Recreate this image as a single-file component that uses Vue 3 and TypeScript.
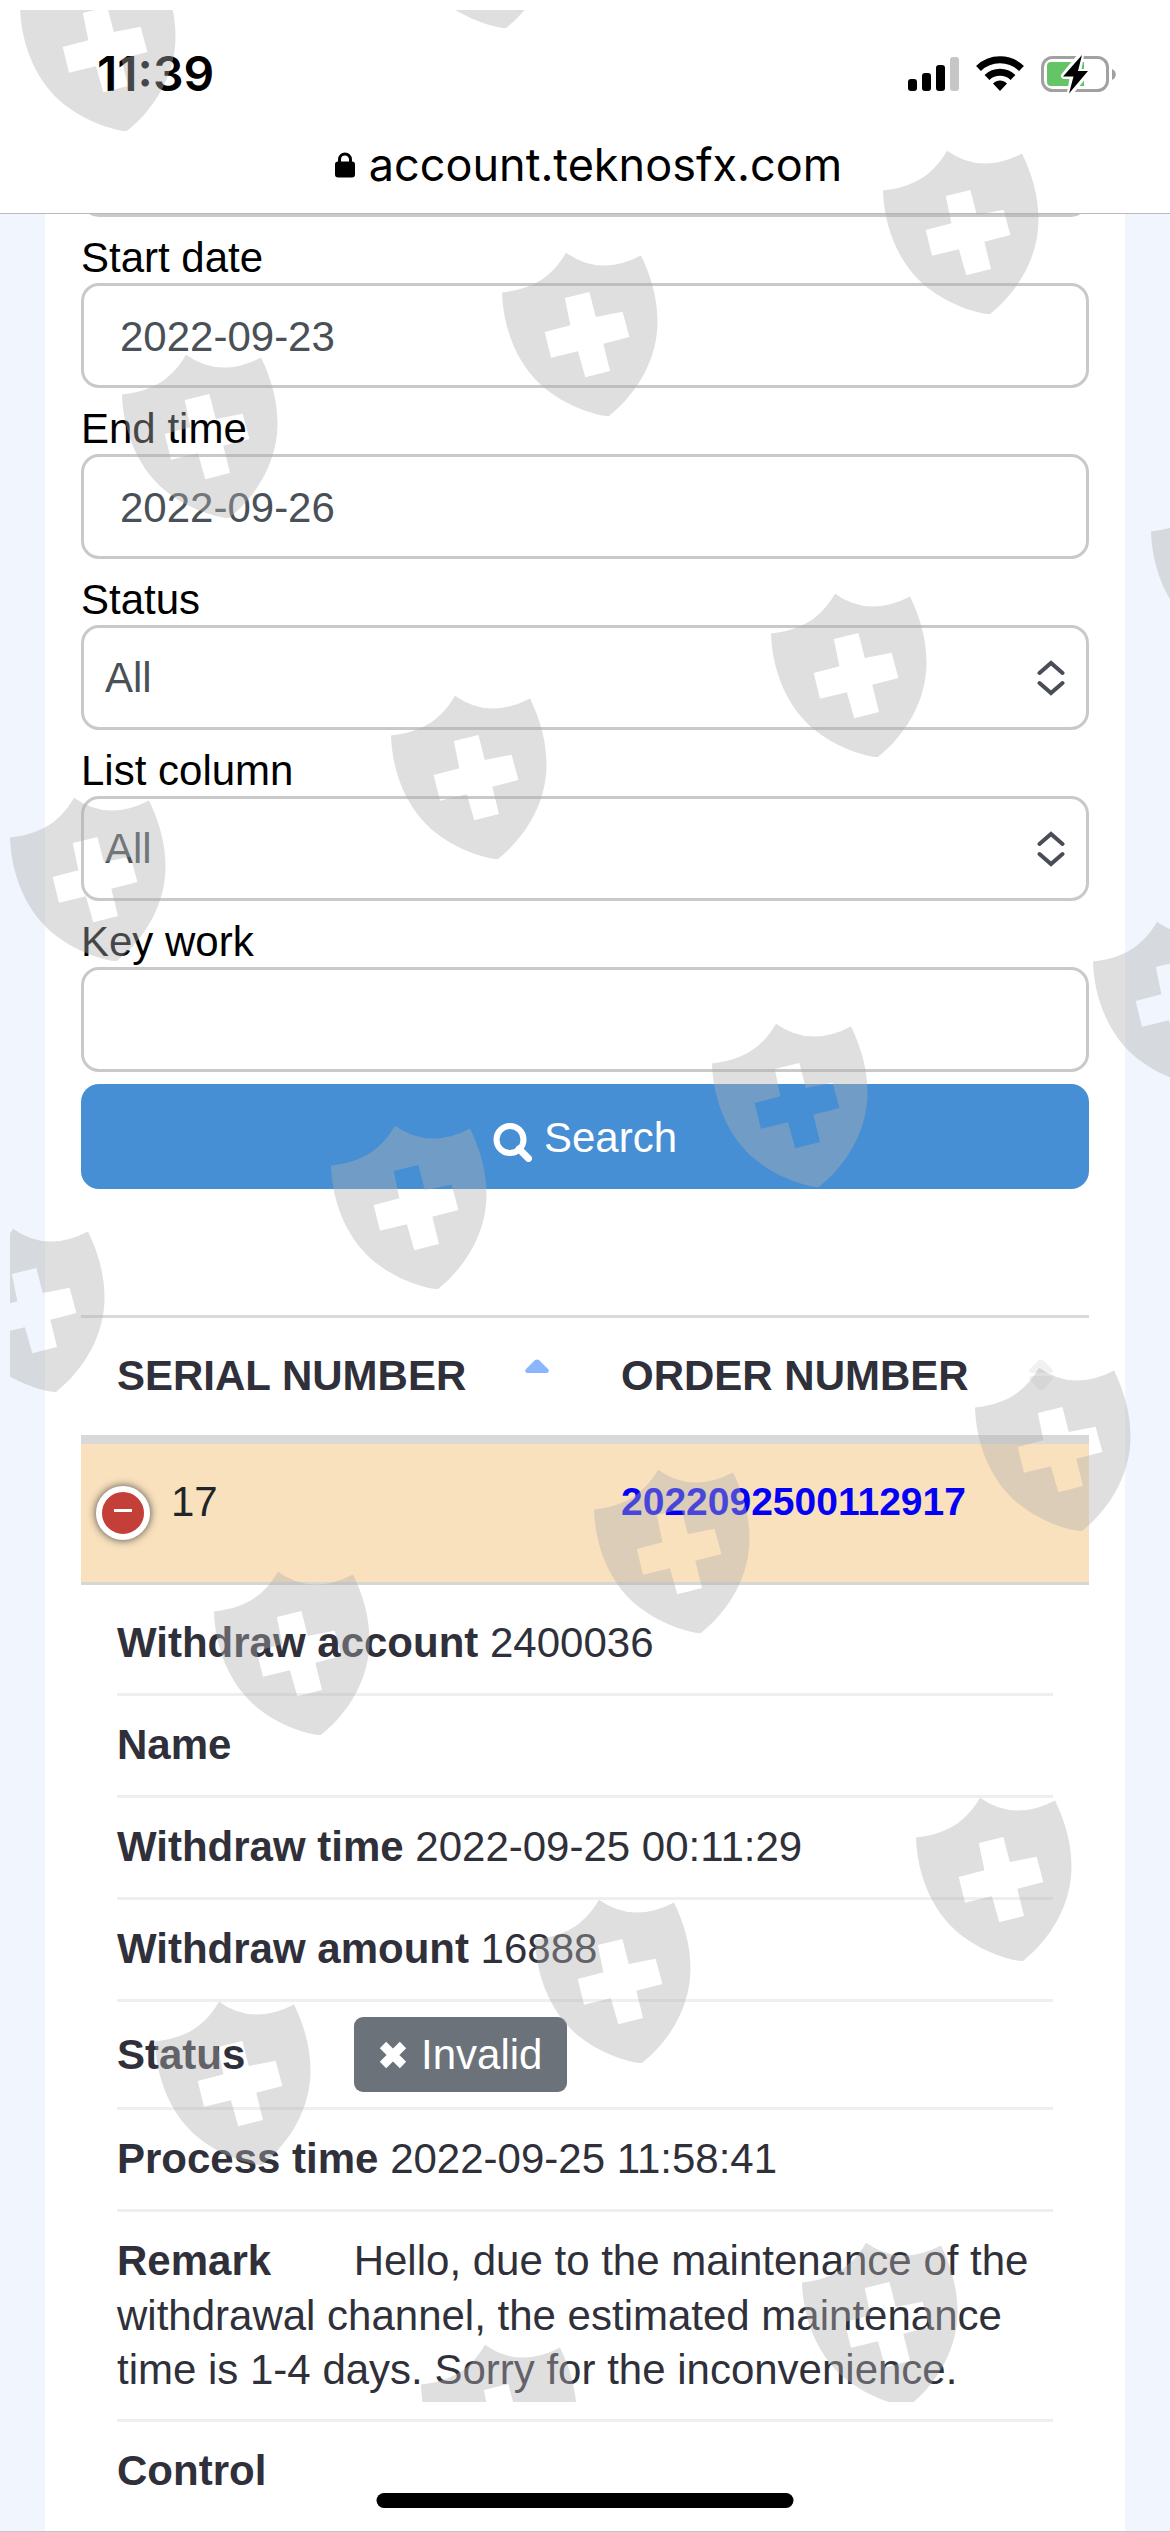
<script setup lang="ts">
import { ref } from 'vue'

interface Detail {
  title: string
  value: string
  badge?: boolean
}

const account = ref('')
const startDate = ref('2022-09-23')
const endDate = ref('2022-09-26')
const status = ref('All')
const column = ref('All')
const keyword = ref('')
const expanded = ref(true)

const details: Detail[] = [
  { title: 'Withdraw account', value: '2400036' },
  { title: 'Name', value: '' },
  { title: 'Withdraw time', value: '2022-09-25 00:11:29' },
  { title: 'Withdraw amount', value: '16888' },
  { title: 'Status', value: 'Invalid', badge: true },
  { title: 'Process time', value: '2022-09-25 11:58:41' },
  {
    title: 'Remark',
    value:
      'Hello, due to the maintenance of the withdrawal channel, the estimated maintenance time is 1-4 days. Sorry for the inconvenience.',
  },
  { title: 'Control', value: '' },
]

// Shield stamps scattered over the screen
const stamps: [number, number][] = [
  [10, -43], [389, -146], [873, 140], [492, 242], [112, 344], [1141, 481],
  [761, 583], [381, 685], [0, 787], [1083, 911], [702, 1013], [321, 1115],
  [-61, 1218], [965, 1357], [584, 1459], [204, 1561], [906, 1787],
  [525, 1889], [145, 1991], [792, 2232], [411, 2334],
]
</script>

<template>
  <div class="screen">
    <header class="chrome">
      <div class="status-bar">
        <span class="clock">11:39</span>
        <svg class="indicators" width="210" height="40" viewBox="0 0 210 40" aria-hidden="true">
          <rect x="2" y="25" width="9" height="12" rx="3" />
          <rect x="16" y="19" width="9" height="18" rx="3" />
          <rect x="30" y="11" width="9" height="26" rx="3" />
          <rect x="44" y="3" width="9" height="34" rx="3" fill="#c6c6c6" />
          <g fill="none" stroke="#000" stroke-width="7">
            <path d="M72.500 14.500A31 31 0 0 1 115.500 14.500" />
            <path d="M81 23.500A19 19 0 0 1 107 23.500" />
          </g>
          <path d="M94 37l-7-7.500c4-4 10-4 14 0z" />
          <rect x="136.500" y="3.500" width="65" height="33" rx="10" fill="none" stroke="#a1a1a1" stroke-width="3" />
          <path d="M206 15c5 2 5 9 0 11z" fill="#a1a1a1" />
          <path d="M145 8h33v24h-33q-4 0-4-4V12q0-4 4-4z" fill="#65c466" />
          <path
            d="M175 1l-17 21h9l-3 17 17-21h-9z"
            stroke="#fff" stroke-width="6" stroke-linejoin="round" fill="#fff"
          />
          <path d="M176 1l-19 21.500h10.500l-4.500 17 19-22.500h-10z" />
        </svg>
      </div>
      <div class="address">
        <svg width="20" height="26" viewBox="0 0 20 26" aria-hidden="true">
          <path d="M4.500 12V7.500a5.500 5.500 0 0 1 11 0V12" fill="none" stroke="#000" stroke-width="3" />
          <rect y="9.500" width="20" height="16" rx="3" />
        </svg>
        <span>account.teknosfx.com</span>
      </div>
    </header>

    <main class="viewport">
      <section class="card">
        <form class="filters" @submit.prevent>
          <input v-model="account" class="control" type="text" aria-label="Account" />

          <label for="start">Start date</label>
          <input id="start" v-model="startDate" class="control" type="text" />

          <label for="end">End time</label>
          <input id="end" v-model="endDate" class="control" type="text" />

          <label for="status">Status</label>
          <div class="select">
            <select id="status" v-model="status" class="control">
              <option>All</option>
            </select>
            <svg width="28" height="36" viewBox="0 0 28 36" aria-hidden="true">
              <path d="M2.500 13L14 3l11.500 10M2.500 23L14 33l11.500-10" />
            </svg>
          </div>

          <label for="column">List column</label>
          <div class="select">
            <select id="column" v-model="column" class="control">
              <option>All</option>
            </select>
            <svg width="28" height="36" viewBox="0 0 28 36" aria-hidden="true">
              <path d="M2.500 13L14 3l11.500 10M2.500 23L14 33l11.500-10" />
            </svg>
          </div>

          <label for="keyword">Key work</label>
          <input id="keyword" v-model="keyword" class="control" type="text" />

          <button class="search" type="submit">
            <svg width="39" height="39" viewBox="0 0 39 39" aria-hidden="true">
              <circle cx="17" cy="16.500" r="13.500" fill="none" stroke="#fff" stroke-width="6" />
              <path d="M26 26l9.500 9.500" stroke="#fff" stroke-width="7" stroke-linecap="round" />
            </svg>
            <span>Search</span>
          </button>
        </form>

        <table class="orders">
          <thead>
            <tr>
              <th scope="col">
                <button class="sort" type="button">
                  <span>SERIAL NUMBER</span>
                  <svg width="24" height="34" viewBox="0 0 24 34" aria-hidden="true">
                    <path d="M2 14q-3-1-1-4l9-9q2-1 4 0l9 9q2 3-1 4z" fill="#8bb6fb" />
                  </svg>
                </button>
              </th>
              <th scope="col">
                <button class="sort" type="button">
                  <span>ORDER NUMBER</span>
                  <svg width="24" height="34" viewBox="0 0 24 34" aria-hidden="true">
                    <path d="M2 14q-3-1-1-4l9-9q2-1 4 0l9 9q2 3-1 4z" fill="#f1f1f1" />
                    <path d="M2 17q-3 1-1 4l9 10q2 1 4 0l9-10q2-3-1-4z" fill="#f1f1f1" />
                  </svg>
                </button>
              </th>
            </tr>
          </thead>
          <tbody>
            <tr class="order">
              <td class="serial">
                <button
                  class="toggle"
                  type="button"
                  aria-label="Toggle details"
                  :aria-expanded="expanded"
                  @click="expanded = !expanded"
                ></button>
                17
              </td>
              <td><a class="number" href="#">2022092500112917</a></td>
            </tr>
            <tr v-if="expanded">
              <td class="detail-cell" colspan="2">
                <ul class="details">
                  <li v-for="item in details" :key="item.title" :class="{ 'has-badge': item.badge }">
                    <span class="title">{{ item.title }}</span>
                    {{ ' ' }}
                    <span v-if="item.badge" class="badge">
                      <svg width="28" height="28" viewBox="0 0 28 28" aria-hidden="true">
                        <path d="M4 4l20 20M24 4L4 24" stroke="#fff" stroke-width="9" />
                      </svg>
                      <span>{{ item.value }}</span>
                    </span>
                    <template v-else>{{ item.value }}</template>
                  </li>
                </ul>
              </td>
            </tr>
          </tbody>
        </table>
      </section>
    </main>

    <div class="home-indicator"></div>

    <div class="stamps" aria-hidden="true">
      <svg width="100%" height="100%">
        <defs>
          <path
            id="stamp"
            fill-rule="evenodd"
            d="M0 40.500C28 37 48 28 64 .7Q98 25 139 3.500C149 24 155.500 46 155.500 70C155.500 105 137 140 107 164C100 164.500 66 157 39 133C14 110 1 75 0 40.500ZM62.800 46L68.400 73.300L42.700 80L49 105.700L75.900 99.300L83.300 125.300L108 119L101.300 91.700L127.400 85L120.600 59.700L93.800 65L87.400 40Z"
          />
        </defs>
        <use v-for="([x, y], i) in stamps" :key="i" href="#stamp" :x="x" :y="y" />
      </svg>
    </div>
  </div>
</template>

<style>
body {
  margin: 0;
  background: #fff;
}
</style>

<style scoped>
* {
  box-sizing: border-box;
}

.screen {
  position: relative;
  display: flex;
  flex-direction: column;
  height: 100vh;
  overflow: hidden;
  border-bottom: 1px solid #c4c4c6;
  background: #fff;
  color: #2f303a;
  font: 42px/54px "Liberation Sans", Arial, sans-serif;
}

button,
input,
select {
  font: inherit;
}

.chrome {
  flex: none;
  padding: 45px 0 18px;
  border-bottom: 1px solid #b9b9be;
  color: #000;
  font-family: Inter, "Liberation Sans", sans-serif;
}

.status-bar {
  display: flex;
  align-items: center;
  justify-content: space-between;
  height: 58px;
  padding: 0 54px 0 97px;
}

.clock {
  font-size: 48px;
  font-weight: 600;
}

.address {
  display: flex;
  align-items: center;
  justify-content: center;
  gap: 14px;
  margin-top: 32px;
  padding-left: 7px;
  font-size: 45px;
  line-height: 60px;
}

.viewport {
  flex: 1;
  min-height: 0;
  overflow: hidden;
  padding: 0 45px;
  background: #f1f5fe;
}

.card {
  min-height: 100%;
  padding: 0 36px;
  background: #fff;
}

.filters {
  display: flex;
  flex-direction: column;
  /* scrolled so that only the lower edge of the first box shows */
  margin-top: -102px;
}

.viewport,
.card {
  display: flow-root;
}

label {
  margin-top: 16px;
  color: #000;
  line-height: 50px;
}

.control {
  display: block;
  width: 100%;
  height: 105px;
  padding: 3px 36px 0;
  border: 3px solid #c9c9c9;
  border-radius: 18px;
  background: #fff;
  color: #495057;
}

.select {
  position: relative;
}

.select .control {
  padding: 0 21px;
  appearance: none;
}

.select svg {
  position: absolute;
  top: 50%;
  right: 24px;
  transform: translateY(-50%);
  fill: none;
  stroke: #494d56;
  stroke-width: 4;
  stroke-linecap: round;
  pointer-events: none;
}

.search {
  display: flex;
  align-items: center;
  justify-content: center;
  gap: 12px;
  height: 105px;
  margin-top: 12px;
  padding: 3px 0 0;
  border: 0;
  border-radius: 18px;
  background: #478fd4;
  color: #fff;
}

.search svg {
  margin-top: 8px;
}

.orders {
  width: 100%;
  margin-top: 126px;
  border-spacing: 0;
  table-layout: fixed;
}

th {
  padding: 0;
  border-top: 3px solid #dadada;
  border-bottom: 9px solid #d9d9d9;
}

.sort {
  display: flex;
  align-items: center;
  justify-content: space-between;
  width: 100%;
  height: 117px;
  padding: 0 36px 2px;
  border: 0;
  background: none;
  color: inherit;
  font-weight: 700;
}

td {
  padding: 0;
}

.order td {
  padding: 31px 36px 53px;
  border-bottom: 3px solid #d6d6d6;
  background: #f9e1bd;
  color: #212529;
}

.order .serial {
  position: relative;
  padding-left: 90px;
}

.toggle {
  position: absolute;
  top: 42px;
  left: 15px;
  display: flex;
  justify-content: center;
  width: 54px;
  height: 54px;
  padding: 17px 0 0;
  border: 6px solid #fff;
  border-radius: 50%;
  background: #c43f38;
  box-shadow: 0 0 9px #444;
}

.toggle::before {
  width: 18px;
  height: 3px;
  background: #fff;
  content: "";
}

.number {
  display: block;
  color: #0400f7;
  font-size: 39px;
  font-weight: 700;
  text-decoration: none;
}

.detail-cell {
  padding: 9px 36px 0;
}

.details {
  margin: 0;
  padding: 0;
  list-style: none;
}

.details li {
  padding: 20px 0 22px;
  border-bottom: 3px solid #efefef;
}

.details li:last-child {
  border-bottom: 0;
}

.title {
  display: inline-block;
  min-width: 225px;
  font-weight: 700;
  line-height: 57px;
}

.details .has-badge {
  display: flex;
  align-items: center;
  gap: 12px;
  padding: 15px 0;
}

.badge {
  display: flex;
  align-items: center;
  gap: 14px;
  height: 75px;
  padding: 0 25px;
  border-radius: 9px;
  background: #6b7279;
  color: #fff;
}

.home-indicator {
  position: absolute;
  bottom: 23px;
  left: 50%;
  width: 417px;
  height: 15px;
  border-radius: 8px;
  background: #000;
  transform: translateX(-50%);
}

.stamps {
  position: absolute;
  inset: 10px 0 129px 10px;
  overflow: hidden;
  fill: rgba(175, 175, 175, 0.4);
  pointer-events: none;
}

.stamps svg {
  display: block;
}
</style>
